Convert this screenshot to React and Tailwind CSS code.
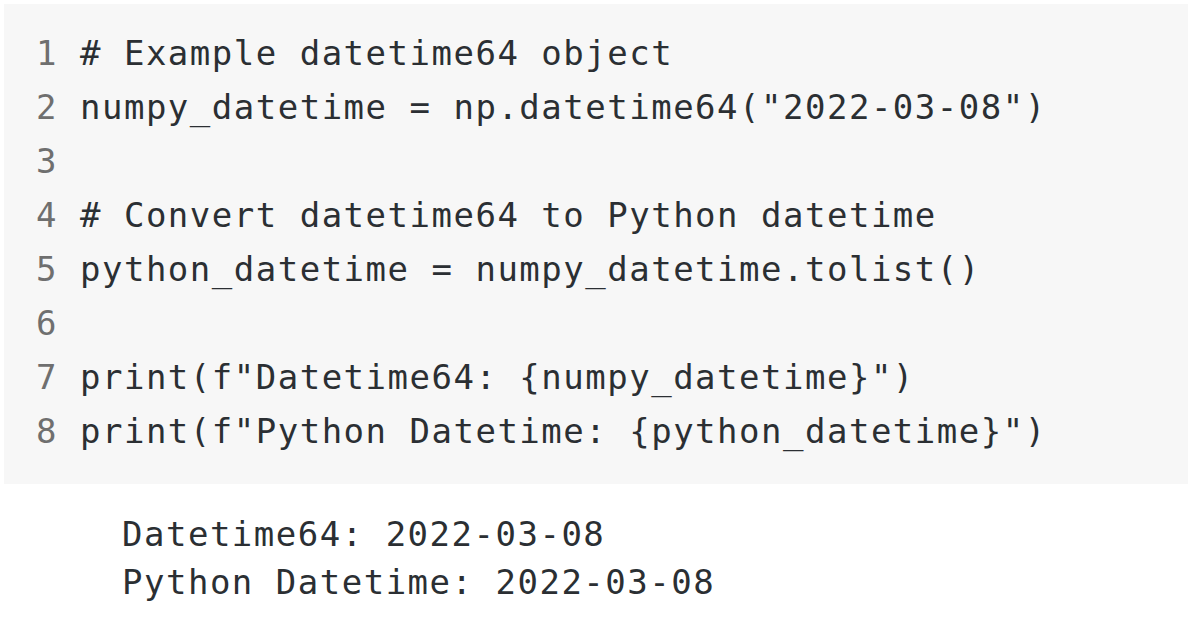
import React from "react";

const codeLines = [
  "# Example datetime64 object",
  'numpy_datetime = np.datetime64("2022-03-08")',
  "",
  "# Convert datetime64 to Python datetime",
  "python_datetime = numpy_datetime.tolist()",
  "",
  'print(f"Datetime64: {numpy_datetime}")',
  'print(f"Python Datetime: {python_datetime}")',
];

const outputLines = ["Datetime64: 2022-03-08", "Python Datetime: 2022-03-08"];

const mono = "font-['DejaVu_Sans_Mono',monospace] text-[34px] tracking-[1.5px]";

const App = () => {
  return (
    <div className="w-[1196px] h-[628px] bg-white overflow-hidden pt-1">
      <div className={`mx-1 w-[1184px] h-[480px] bg-[#f7f7f7] pt-[22px] pl-8 ${mono}`}>
        {codeLines.map((line, i) => (
          <div key={i} className="h-[54px] leading-[54px] whitespace-pre">
            <span className="text-[#6f6f6f]">{i + 1}</span>
            <span className="text-[#2b2f33]"> {line}</span>
          </div>
        ))}
      </div>
      <div className={`pt-[26px] pl-[122px] text-[#2b2f33] ${mono}`}>
        {outputLines.map((line, i) => (
          <div key={i} className="h-[48px] leading-[48px] whitespace-pre">
            {line}
          </div>
        ))}
      </div>
    </div>
  );
};

export default App;
